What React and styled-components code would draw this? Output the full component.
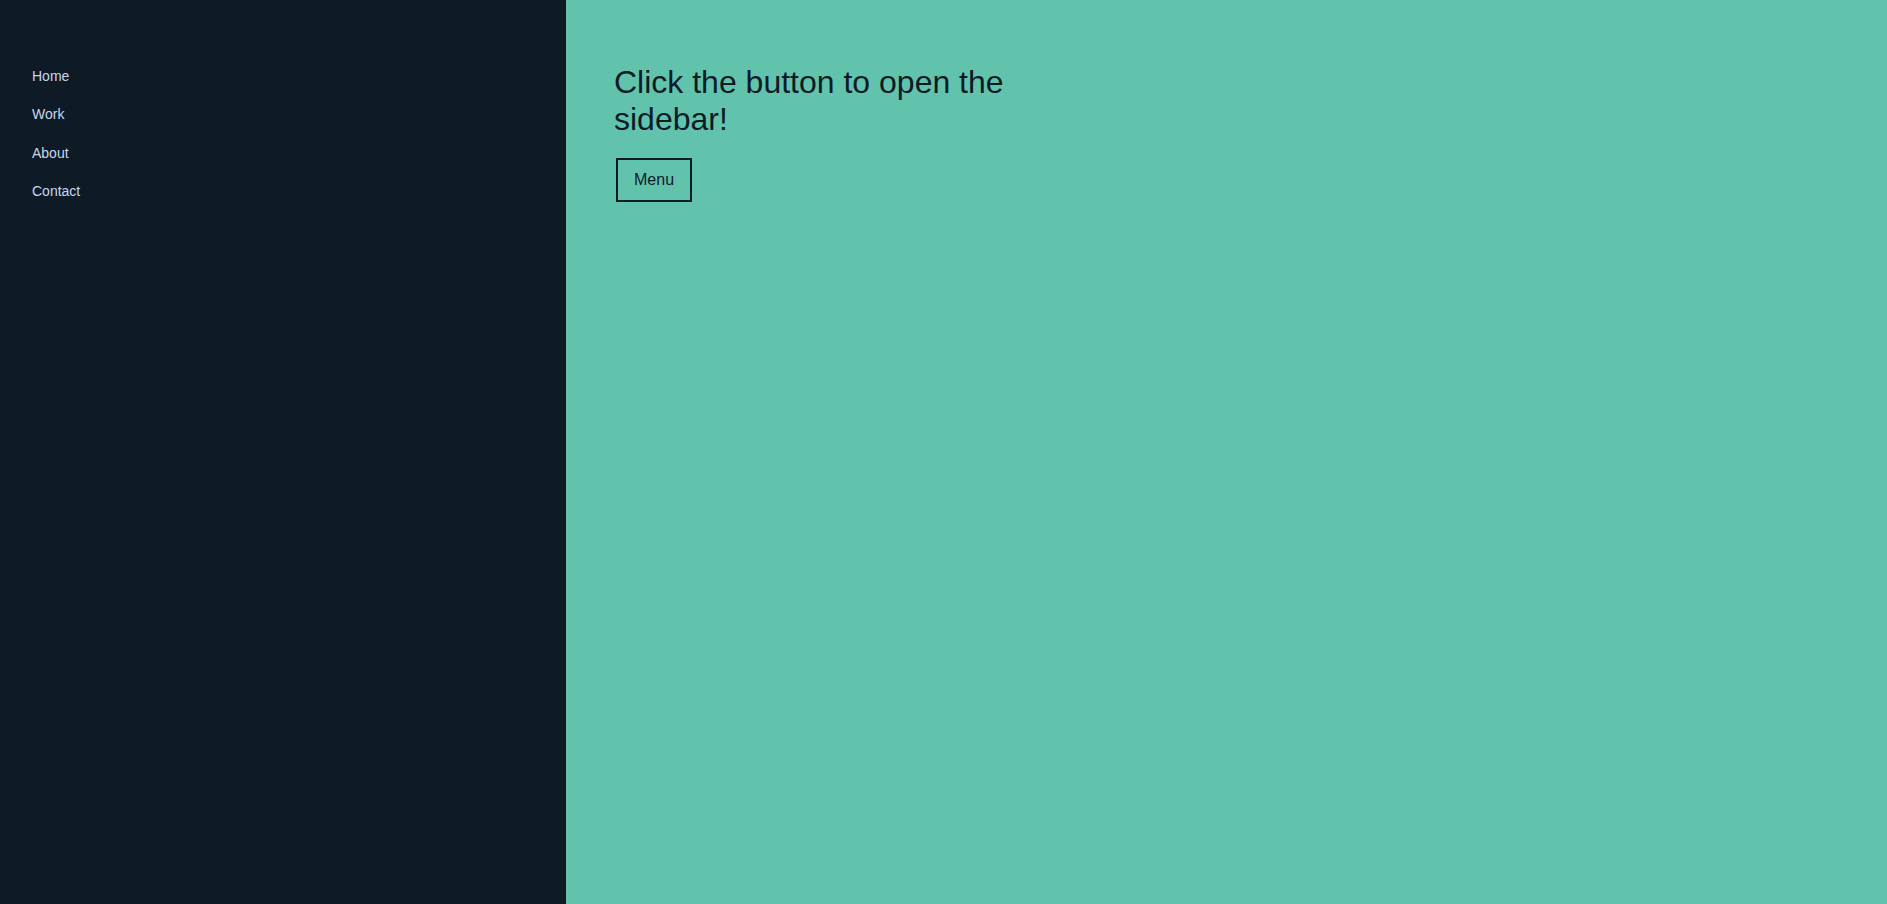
import React from "react";
import styled, { createGlobalStyle } from "styled-components";

const Global = createGlobalStyle`
  html, body { margin: 0; padding: 0; height: 100%; }
  body { font-family: "Liberation Sans", Arial, sans-serif; background: #62c3ad; }
  #root { height: 100%; }
`;

const Layout = styled.div`
  display: grid;
  grid-template-columns: 566px 1fr;
  height: 904px;
`;

const Sidebar = styled.nav`
  background: #0e1b27;
  padding-top: 57px;
  display: flex;
  flex-direction: column;
`;

const NavLink = styled.a`
  display: block;
  padding: 11px 32px;
  font-size: 14px;
  line-height: 16.4px;
  color: #c6d7ea;
  text-decoration: none;
`;

const Main = styled.main`
  background: #62c3ad;
  padding: 64px 48px;
  color: #0e1b27;
`;

const Heading = styled.h1`
  margin: 0 0 20px;
  font-size: 32px;
  font-weight: 400;
  line-height: 36.8px;
  max-width: 420px;
`;

const MenuButton = styled.button`
  margin-left: 2px;
  background: transparent;
  border: 2px solid #0e1b27;
  color: #0e1b27;
  font-family: "Liberation Sans", Arial, sans-serif;
  font-size: 16px;
  line-height: 18px;
  padding: 11px 16px;
  cursor: pointer;
`;

export default function App() {
  return (
    <>
      <Global />
      <Layout>
        <Sidebar>
          {["Home", "Work", "About", "Contact"].map((l) => (
            <NavLink key={l} href="#">{l}</NavLink>
          ))}
        </Sidebar>
        <Main>
          <Heading>Click the button to open the sidebar!</Heading>
          <MenuButton>Menu</MenuButton>
        </Main>
      </Layout>
    </>
  );
}
